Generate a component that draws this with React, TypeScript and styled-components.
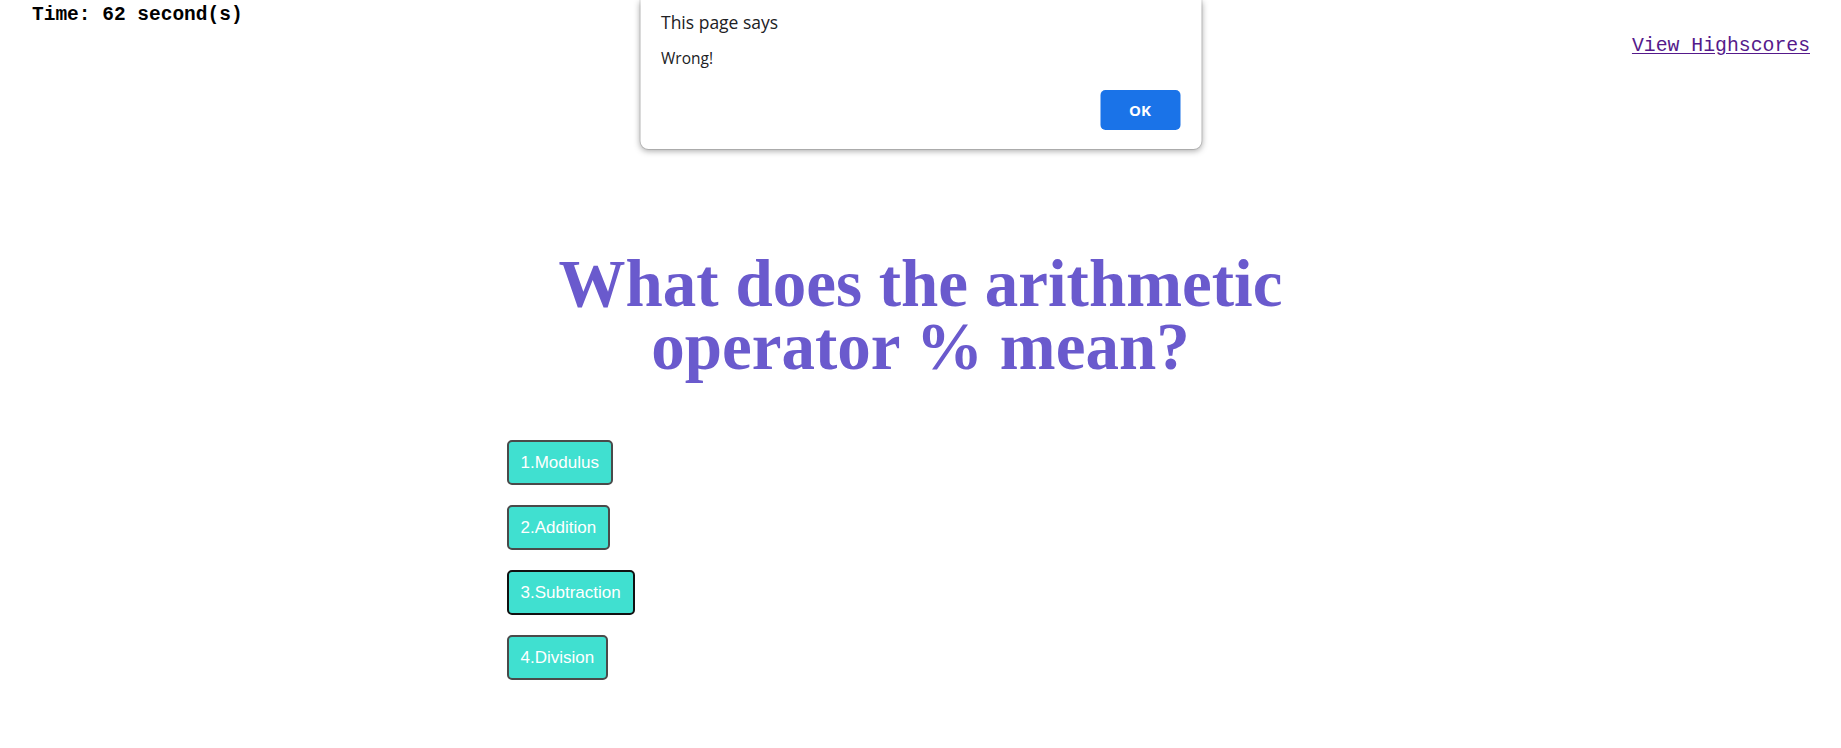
import React from "react";
import styled, { createGlobalStyle } from "styled-components";

const GlobalStyle = createGlobalStyle`
  html, body {
    margin: 0;
    padding: 0;
    background: #ffffff;
  }
  body {
    font-family: "Liberation Serif", serif;
  }
`;

const Page = styled.div`
  position: relative;
  min-height: 748px;
`;

const Header = styled.header`
  display: flex;
  justify-content: space-between;
  align-items: flex-start;
  padding: 4px 31px 0 32px;
`;

const Timer = styled.div`
  font-family: "Liberation Mono", "Courier New", monospace;
  font-weight: bold;
  font-size: 19.5px;
  line-height: 22px;
  color: #000;
`;

const HighscoreLink = styled.a`
  margin-top: 31px;
  font-family: "Liberation Mono", "Courier New", monospace;
  font-size: 19.8px;
  line-height: 22px;
  color: #551a8b;
  text-decoration: underline;
  text-underline-offset: 2px;
`;

const Quiz = styled.main`
  width: 828px;
  margin: 195px auto 0;
`;

const Question = styled.h1`
  margin: 0 0 62px;
  text-align: center;
  font-family: "Liberation Serif", "Times New Roman", serif;
  font-weight: bold;
  font-size: 67px;
  line-height: 63px;
  color: #6a5acd;
`;

const Choices = styled.div`
  display: flex;
  flex-direction: column;
  align-items: flex-start;
  gap: 20px;
`;

const Choice = styled.button<{ $focused?: boolean }>`
  box-sizing: border-box;
  height: 45px;
  padding: 0 12px;
  background: #40e0d0;
  color: #ffffff;
  font-family: "Liberation Sans", Arial, sans-serif;
  font-size: 17px;
  border: 2px solid ${(p) => (p.$focused ? "#111111" : "#4a4a4a")};
  border-radius: 5px;
  cursor: pointer;
`;

const Dialog = styled.div`
  position: absolute;
  top: 0;
  left: 50%;
  transform: translateX(-50%);
  box-sizing: border-box;
  width: 561px;
  height: 149px;
  padding: 10px 21px 19px 21px;
  background: #ffffff;
  border-radius: 0 0 8px 8px;
  box-shadow: 0 0 0 1px rgba(0, 0, 0, 0.12), 0 2px 6px rgba(0, 0, 0, 0.35);
  display: flex;
  flex-direction: column;
  font-family: "Open Sans", "Noto Sans", sans-serif;
  color: #202124;
`;

const DialogTitle = styled.div`
  font-size: 17.5px;
  line-height: 24px;
`;

const DialogMessage = styled.div`
  margin-top: 14px;
  font-size: 15.5px;
  line-height: 21px;
`;

const DialogActions = styled.div`
  margin-top: auto;
  display: flex;
  justify-content: flex-end;
`;

const OkButton = styled.button`
  width: 80px;
  height: 40px;
  border: none;
  border-radius: 5px;
  background: #1a73e8;
  color: #ffffff;
  font-family: "Open Sans", "Noto Sans", sans-serif;
  font-weight: bold;
  font-size: 15px;
  cursor: pointer;
`;

const choices = [
  { label: "1.Modulus" },
  { label: "2.Addition" },
  { label: "3.Subtraction", focused: true },
  { label: "4.Division" },
];

export default function App() {
  return (
    <Page>
      <GlobalStyle />
      <Header>
        <Timer>Time: 62 second(s)</Timer>
        <HighscoreLink href="#">View Highscores</HighscoreLink>
      </Header>
      <Quiz>
        <Question>What does the arithmetic operator % mean?</Question>
        <Choices>
          {choices.map((c) => (
            <Choice key={c.label} $focused={c.focused}>
              {c.label}
            </Choice>
          ))}
        </Choices>
      </Quiz>
      <Dialog role="alertdialog">
        <DialogTitle>This page says</DialogTitle>
        <DialogMessage>Wrong!</DialogMessage>
        <DialogActions>
          <OkButton>OK</OkButton>
        </DialogActions>
      </Dialog>
    </Page>
  );
}
